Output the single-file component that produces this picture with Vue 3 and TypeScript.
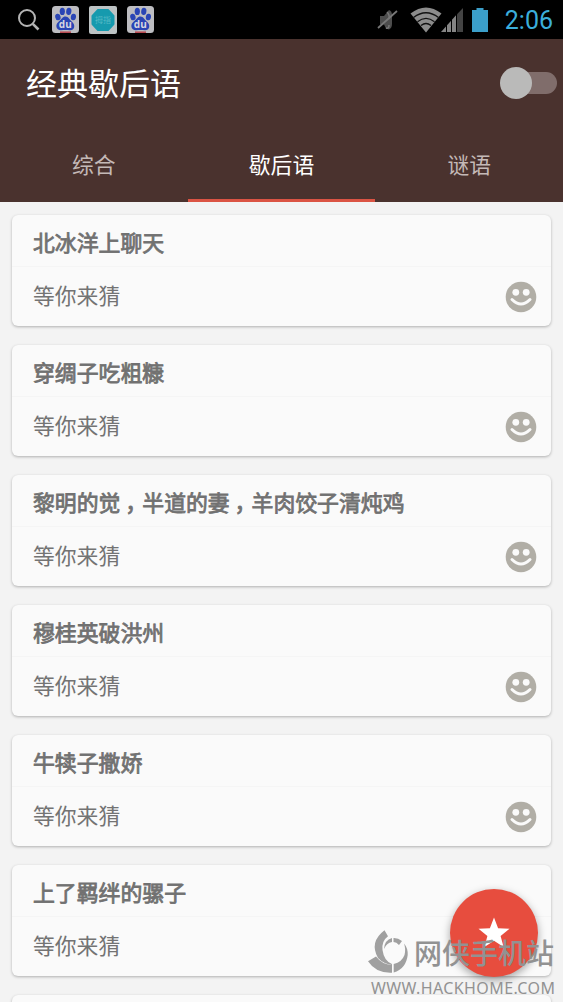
<script setup lang="ts">
import { ref } from 'vue'

interface Riddle {
    id: number
    title: string
}

const tabs: string[] = ['综合', '歇后语', '谜语']
const activeTab = ref(1)
const enabled = ref(false)

const riddles: Riddle[] = [
    { id: 1, title: '北冰洋上聊天' },
    { id: 2, title: '穿绸子吃粗糠' },
    { id: 3, title: '黎明的觉，半道的妻，羊肉饺子清炖鸡' },
    { id: 4, title: '穆桂英破洪州' },
    { id: 5, title: '牛犊子撒娇' },
    { id: 6, title: '上了羁绊的骡子' },
    { id: 7, title: '' }
]

// keeps the commas as separate parts so they can be centred in their cell
const parts = (title: string) => title.split(/(，)/)
</script>

<template>
    <div class="screen">
        <div class="status">
            <svg class="search" width="24" height="24" viewBox="0 0 24 24" fill="none" stroke="#b4b4b4" stroke-width="2">
                <circle cx="10" cy="10" r="8" />
                <line x1="15.8" y1="15.8" x2="21.5" y2="21.5" stroke-width="2.6" />
            </svg>
            <template v-for="n in 3" :key="n">
                <svg v-if="n !== 2" class="app-icon" width="27" height="27" viewBox="0 0 27 27">
                    <rect width="27" height="27" rx="3.5" fill="#bdbdc1" />
                    <g fill="#2a45b5">
                        <ellipse cx="5.9" cy="11" rx="2.7" ry="3.3" transform="rotate(-12 5.9 11)" />
                        <ellipse cx="10.3" cy="5.4" rx="2.6" ry="3.6" />
                        <ellipse cx="16.8" cy="5.4" rx="2.6" ry="3.6" transform="rotate(8 16.8 5.4)" />
                        <ellipse cx="21.4" cy="11" rx="2.6" ry="3.3" transform="rotate(8 21.4 11)" />
                        <path d="M13.5 10.5c3 0 3.8 3 6 4.8c4.8 3.8 2.8 9.2-1.5 9c-3-.3-6-.3-9 0c-4.8.2-6.5-5.5-2-9c2.5-2 3.5-4.8 6.5-4.8z" />
                    </g>
                    <text x="13.3" y="22" text-anchor="middle" class="du">du</text>
                    <path d="M8 25.4h11v1.6h-11z" fill="#b84b52" />
                </svg>
                <svg v-else class="app-icon" width="28" height="28" viewBox="0 0 28 28">
                    <rect width="28" height="28" rx="2" fill="#bdc3c4" />
                    <path d="M9 4L19 4L24.5 10V18L19 24L9 24L3.5 18V10Z" fill="#169aae" stroke="#169aae" stroke-width="2" stroke-linejoin="round" />
                    <text x="14" y="17" text-anchor="middle" class="badge">拇指</text>
                </svg>
            </template>
            <div class="system">
                <svg width="22" height="24" viewBox="0 0 22 24">
                    <path d="M3 8h4l5-6q3 1 3 5v9q0 4-3 5.5l-3-1l-2-4h-4z" fill="#4d4d4d" />
                    <path d="M1 20L20 3" stroke="#777" stroke-width="1.8" />
                    <path d="M10 4q3 3 2 7M9 20q3 1 3-3" stroke="#777" fill="none" stroke-width="1.5" />
                </svg>
                <svg class="wifi" width="32" height="26" viewBox="0 0 32 26">
                    <path d="M0.5 6.5Q16-5.5 31.5 6.5L16 25.5Z" fill="#8c8c8c" />
                    <g fill="none" stroke="#111" stroke-width="1.3">
                        <path d="M3.5 10.5Q16 1 28.5 10.5" />
                        <path d="M7.5 14.8Q16 8 24.5 14.8" />
                        <path d="M11 18.5Q16 14.5 21 18.5" />
                    </g>
                </svg>
                <svg class="signal" width="22" height="24" viewBox="0 0 22 24">
                    <path d="M0 24L15 7.3V24Z" fill="#858585" />
                    <path d="M16 6.3L22 0V24H16Z" fill="#444" />
                    <path d="M5.5 16V24M10.5 10V24M15.5 5V24" stroke="#000" stroke-width="1" />
                </svg>
                <svg class="battery" width="16" height="24" viewBox="0 0 16 24">
                    <path d="M0 2h4.5V0h7v2H16v22H0z" fill="#3b9fca" />
                </svg>
                <span class="clock">2:06</span>
            </div>
        </div>
        <header class="header">
            <div class="toolbar">
                <h1>经典歇后语</h1>
                <button class="switch" :class="{ on: enabled }" @click="enabled = !enabled">
                    <span class="thumb"></span>
                </button>
            </div>
            <nav class="tabs">
                <button v-for="(tab, i) in tabs" :key="tab" class="tab" :class="{ active: i === activeTab }"
                    @click="activeTab = i">
                    {{ tab }}
                </button>
            </nav>
        </header>
        <main class="list">
            <article v-for="riddle in riddles" :key="riddle.id" class="card">
                <template v-if="riddle.title">
                    <h2>
                        <span v-for="(part, i) in parts(riddle.title)" :key="i" :class="{ comma: part === '，' }">{{ part }}</span>
                    </h2>
                    <div class="answer">
                        <span>等你来猜</span>
                        <svg width="32" height="32" viewBox="0 0 32 32">
                            <circle cx="16" cy="16" r="15.3" fill="#b1aea6" />
                            <circle cx="10.8" cy="11.3" r="3.4" fill="#fafafa" />
                            <circle cx="21.2" cy="11.3" r="3.4" fill="#fafafa" />
                            <path d="M7 18.5Q16 27.5 25 18.5" fill="none" stroke="#fafafa" stroke-width="3" stroke-linecap="round" />
                        </svg>
                    </div>
                </template>
            </article>
        </main>
        <button class="fab">
            <svg width="32" height="32" viewBox="0 0 32 32">
                <path d="M16 0.5L20.1 11.2L31.5 11.8L22.6 18.9L25.6 30L16 23.7L6.4 30L9.4 18.9L0.5 11.8L11.9 11.2Z" fill="#fff" />
            </svg>
        </button>
        <div class="watermark">
            <div class="brand">
                <svg width="40" height="44" viewBox="0 0 40 44">
                    <path d="M16.5 0.3L20 6.3Q13.5 11 14.5 20Q16 31 24 34V35Q15 33.5 10 28Q1 12 16.5 0.3Z" />
                    <path d="M0 31.3L8 26.5Q14 34.5 24 35V42.7Q8 43.5 0 31.3Z" />
                    <path d="M25.7 34Q34 32 36.5 25Q38 19 36 13.5Q40 18 39.7 25Q38 39 25.7 42.5Z" />
                    <path d="M25.5 8Q30 7.8 34 11L31 15Q28.5 12 25.5 12Z" />
                    <path d="M24 8V12Q18.5 13 16 19Q16.5 10 24 8Z" />
                </svg>
                <span>网侠手机站</span>
            </div>
            <div class="url">WWW.HACKHOME.COM</div>
        </div>
    </div>
</template>

<style>
body {
    margin: 0;
    overflow: hidden;
}
</style>

<style scoped>
.screen {
    position: relative;
    display: flex;
    flex-direction: column;
    width: 563px;
    height: 1002px;
    overflow: hidden;
    background: #f3f3f3;
    font-family: "Noto Sans CJK SC", sans-serif;
}

button {
    padding: 0;
    border: none;
    font-family: inherit;
    cursor: pointer;
}

.status {
    display: flex;
    flex: none;
    align-items: center;
    box-sizing: border-box;
    height: 39px;
    padding: 0 10px 0 17px;
    background: #000;
}

.search {
    margin-right: 11px;
}

.app-icon {
    margin-right: 10px;
}

.du {
    fill: #d8d8e0;
    font: bold 10px "Open Sans", sans-serif;
}

.badge {
    fill: #55b9c5;
    font-size: 8px;
}

.system {
    display: flex;
    align-items: center;
    margin-left: auto;
}

.wifi {
    margin-left: 11px;
}

.signal {
    margin-left: -1px;
}

.battery {
    margin: 0 17px 0 9px;
}

.clock {
    color: #3baedb;
    font: 25px/41px Roboto, sans-serif;
    padding-top: 2px;
}

.header {
    flex: none;
    height: 163px;
    background: #4a322e;
}

.toolbar {
    display: flex;
    align-items: center;
    justify-content: space-between;
    height: 88px;
    padding: 0 6px 0 26px;
}

h1 {
    margin: 0;
    color: #fff;
    font-size: 31px;
    font-weight: 400;
    line-height: 86px;
    padding-bottom: 2px;
}

.switch {
    display: flex;
    align-items: center;
    width: 54px;
    height: 22px;
    border-radius: 11px;
    background: linear-gradient(90deg, transparent 14px, #806d6b 14px);
}

.thumb {
    width: 32px;
    height: 32px;
    margin-left: -3px;
    flex: none;
    border-radius: 50%;
    background: #babab9;
}

.switch.on {
    justify-content: flex-end;
}

.tabs {
    display: flex;
    height: 75px;
}

.tab {
    flex: 1;
    box-sizing: border-box;
    padding-top: 2px;
    border-bottom: 3px solid transparent;
    background: none;
    color: #c4b9b7;
    font-size: 21.8px;
    line-height: 70px;
}

.tab.active {
    border-color: #db5444;
    color: #fff;
}

.list {
    display: flex;
    flex-direction: column;
    gap: 19px;
    padding: 13px 12px 0;
}

.card {
    flex: none;
    height: 111px;
    border-radius: 6px;
    background: #fafafa;
    box-shadow: 0 1px 3px rgb(0 0 0 / 28%);
}

h2 {
    box-sizing: border-box;
    height: 52px;
    margin: 0;
    padding-left: 21px;
    border-bottom: 1px solid #f5f5f5;
    color: #717171;
    font-size: 21.87px;
    font-weight: 400;
    line-height: 53px;
    white-space: nowrap;
    -webkit-text-stroke: 0.8px #717171;
}

/* half-width comma, padded back to a full cell */
.comma {
    padding-right: 6.2px;
    padding-left: 4.7px;
    font-feature-settings: "halt";
}

.answer {
    display: flex;
    align-items: center;
    justify-content: space-between;
    box-sizing: border-box;
    height: 59px;
    padding: 1px 14px 0 21px;
    color: #737373;
    font-size: 21.8px;
}

.answer span {
    padding-bottom: 6px;
}

.fab {
    position: absolute;
    top: 889px;
    left: 450px;
    display: flex;
    align-items: center;
    justify-content: center;
    width: 88px;
    height: 88px;
    border-radius: 50%;
    background: #e74d3e;
    box-shadow: 0 3px 8px rgb(0 0 0 / 35%);
}

.watermark {
    position: absolute;
    top: 930px;
    left: 368px;
    color: #929292;
    pointer-events: none;
}

.brand {
    display: flex;
    align-items: center;
    gap: 6px;
    height: 44px;
    font-size: 28px;
    font-weight: 500;
    line-height: 44px;
    white-space: nowrap;
}

.brand svg {
    fill: #a0a0a0;
}

.url {
    margin: 3px 0 0 3px;
    font: 16px/22px "Noto Sans", sans-serif;
    letter-spacing: 0.4px;
}
</style>
